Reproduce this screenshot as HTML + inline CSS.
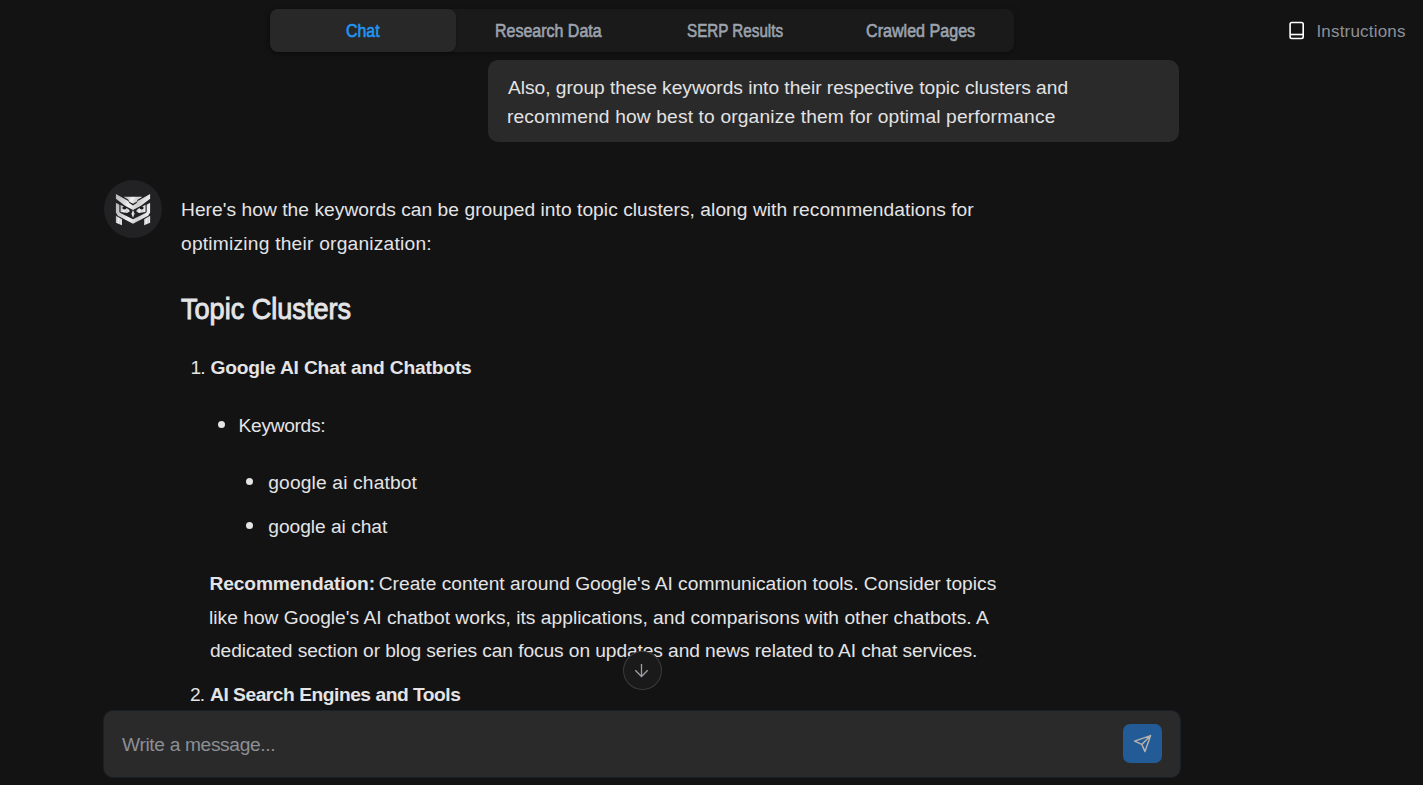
<!DOCTYPE html>
<html><head><meta charset="utf-8">
<style>
*{box-sizing:border-box;margin:0;padding:0}
html,body{width:1423px;height:785px;overflow:hidden;background:#131313;font-family:"Liberation Sans",sans-serif;color:#e4e4e6}
.abs{position:absolute}
.ln{position:absolute;white-space:nowrap}
#tabs{position:absolute;left:270px;top:9px;width:744px;height:43px;background:#1a1a1a;border-radius:8px;box-shadow:0 2px 6px rgba(0,0,0,.25)}
#tabon{position:absolute;left:270px;top:9px;width:186px;height:43px;background:#282828;border-radius:8px;box-shadow:0 1px 3px rgba(0,0,0,.3)}
#bubble{position:absolute;left:488px;top:60px;width:691px;height:82px;background:#2a2a2a;border-radius:10px}
#avatar{position:absolute;left:104px;top:180px;width:58px;height:58px;border-radius:50%;background:#222224}
#input{position:absolute;left:102.5px;top:709.5px;width:1078.5px;height:68px;background:#2a2a2a;border-radius:10px;border:1px solid #18202a}
#send{position:absolute;left:1123px;top:724px;width:39px;height:39px;background:#225b96;border-radius:7px}
#down{position:absolute;left:623px;top:651px;width:38.5px;height:39px;border-radius:50%;background:#1a1a1a;border:1px solid #3c3c3c}
.dot{position:absolute;width:7px;height:7px;border-radius:50%;background:#e4e4e6}
</style></head><body>
<div id="tabs"></div>
<div id="tabon"></div>
<svg class="abs" style="left:1287px;top:20px" width="20" height="21" viewBox="0 0 20 21">
  <rect x="3.1" y="2.5" width="13.1" height="16" rx="1.7" fill="none" stroke="#fff" stroke-width="1.6"/>
  <line x1="3.1" y1="14.5" x2="16.2" y2="14.5" stroke="#fff" stroke-width="1.6"/>
</svg>
<div id="bubble"></div>
<div id="avatar"></div>
<svg class="abs" style="left:113px;top:191px" width="40" height="38" viewBox="0 0 826 785" preserveAspectRatio="none">
  <defs><linearGradient id="g" x1="0" y1="0" x2="1" y2="0.2"><stop offset="0" stop-color="#b4b4b4"/><stop offset="0.3" stop-color="#d4d4d4"/><stop offset="0.5" stop-color="#f2f2f2"/><stop offset="0.75" stop-color="#cfcfcf"/><stop offset="1" stop-color="#ececec"/></linearGradient></defs>
  <g fill="url(#g)">
  <path d="M60 63 L315 204 L337 250 L413 300 L489 250 L511 204 L766 63 L766 161 L578 304 L413 390 L248 304 L60 161 Z"/>
  <path d="M231 118 L595 118 L595 127 L513 176 L489 224 L413 262 L337 224 L313 176 L231 127 Z"/>
  <path d="M60 242 L131 285 L131 436 L153 452 L413 585 L673 452 L695 436 L695 285 L766 242 L766 442 L727 510 L413 677 L99 510 L60 442 Z"/>
  <path d="M155 282 L320 378 L350 420 L290 452 L155 432 Z"/>
  <path d="M671 282 L506 378 L476 420 L536 452 L671 432 Z"/>
  <path d="M413 392 L446 470 L413 555 L380 470 Z"/>
  <path d="M60 510 L184 582 L184 708 L60 657 Z"/>
  <path d="M766 510 L642 582 L642 708 L766 657 Z"/>
  </g>
  <ellipse cx="236" cy="350" rx="42" ry="30" fill="#1b1b1d"/>
  <ellipse cx="590" cy="350" rx="42" ry="30" fill="#1b1b1d"/>
</svg>
<div class="dot" style="left:218px;top:421px"></div>
<div class="dot" style="left:246px;top:478px"></div>
<div class="dot" style="left:246px;top:522px"></div>
<div id="input"></div>
<div id="send"></div>
<svg class="abs" style="left:1133.1px;top:733.7px" width="19.2" height="19.2" viewBox="0 0 24 24"><path d="M22 2 L11 13 M22 2 L15 22 L11 13 L2 9 Z" fill="none" stroke="#b6b3ae" stroke-width="1.8" stroke-linejoin="round" stroke-linecap="round"/></svg>
<div class="ln" style="left:345.90px;top:20px;font-size:17.6px;line-height:22px;color:#2196f3;-webkit-text-stroke:0.6px #2196f3;transform:scaleX(0.9053);transform-origin:0 0">Chat</div>
<div class="ln" style="left:494.79px;top:20px;font-size:17.6px;line-height:22px;color:#9ca3af;-webkit-text-stroke:0.6px #9ca3af;transform:scaleX(0.9085);transform-origin:0 0">Research Data</div>
<div class="ln" style="left:686.90px;top:20px;font-size:17.6px;line-height:22px;color:#9ca3af;-webkit-text-stroke:0.6px #9ca3af;transform:scaleX(0.864);transform-origin:0 0">SERP Results</div>
<div class="ln" style="left:866.20px;top:20px;font-size:17.6px;line-height:22px;color:#9ca3af;-webkit-text-stroke:0.6px #9ca3af;transform:scaleX(0.915);transform-origin:0 0">Crawled Pages</div>
<div class="ln" style="left:1316.40px;top:21px;font-size:17px;line-height:22px;color:#8c9199;letter-spacing:0.191px">Instructions</div>
<div class="ln" style="left:508.00px;top:77px;font-size:19.2px;line-height:22px;color:#e2e2e4;letter-spacing:-0.03px">Also, group these keywords into their respective topic clusters and</div>
<div class="ln" style="left:507.00px;top:106px;font-size:19.2px;line-height:22px;color:#e2e2e4;letter-spacing:0.15px">recommend how best to organize them for optimal performance</div>
<div class="ln" style="left:181.00px;top:199px;font-size:19.2px;line-height:22px;color:#e4e4e6;letter-spacing:0.045px">Here&#39;s how the keywords can be grouped into topic clusters, along with recommendations for</div>
<div class="ln" style="left:181.00px;top:233px;font-size:19.2px;line-height:22px;color:#e4e4e6;letter-spacing:0.221px">optimizing their organization:</div>
<div class="ln" style="left:181.00px;top:292px;font-size:28.8px;line-height:34px;color:#e4e4e6;-webkit-text-stroke:0.9px #e4e4e6;transform:scaleX(0.9403);transform-origin:0 0">Topic Clusters</div>
<div class="ln" style="left:190.50px;top:357px;font-size:19.2px;line-height:22px;color:#e4e4e6;letter-spacing:-1px">1.</div>
<div class="ln" style="left:210.40px;top:357px;font-size:19.2px;line-height:22px;color:#e4e4e6;font-weight:bold;letter-spacing:-0.169px">Google AI Chat and Chatbots</div>
<div class="ln" style="left:238.60px;top:415px;font-size:19.2px;line-height:22px;color:#e4e4e6;letter-spacing:-0.325px">Keywords:</div>
<div class="ln" style="left:268.30px;top:472px;font-size:19.2px;line-height:22px;color:#e4e4e6;letter-spacing:0.156px">google ai chatbot</div>
<div class="ln" style="left:268.30px;top:516px;font-size:19.2px;line-height:22px;color:#e4e4e6;letter-spacing:-0.038px">google ai chat</div>
<div class="ln" style="left:209.50px;top:573px;font-size:19.2px;line-height:22px;color:#e4e4e6;font-weight:bold;letter-spacing:-0.129px">Recommendation:</div>
<div class="ln" style="left:378.70px;top:573px;font-size:19.2px;line-height:22px;color:#e4e4e6;letter-spacing:0.009px">Create content around Google&#39;s AI communication tools. Consider topics</div>
<div class="ln" style="left:209.00px;top:607px;font-size:19.2px;line-height:22px;color:#e4e4e6;letter-spacing:0.019px">like how Google&#39;s AI chatbot works, its applications, and comparisons with other chatbots. A</div>
<div class="ln" style="left:210.00px;top:640px;font-size:19.2px;line-height:22px;color:#e4e4e6;letter-spacing:-0.089px">dedicated section or blog series can focus on updates and news related to AI chat services.</div>
<div class="ln" style="left:190.00px;top:684px;font-size:19.2px;line-height:22px;color:#e4e4e6;letter-spacing:-1px">2.</div>
<div class="ln" style="left:210.00px;top:684px;font-size:19.2px;line-height:22px;color:#e4e4e6;font-weight:bold;letter-spacing:-0.465px">AI Search Engines and Tools</div>
<div class="ln" style="left:122.00px;top:734px;font-size:19.2px;line-height:22px;color:#8b8f96;letter-spacing:-0.353px">Write a message...</div>
<div id="down"></div>
<svg class="abs" style="left:630px;top:658px" width="24" height="24" viewBox="0 0 24 24"><path d="M11.5 6 V18.4 M5.3 12.3 L11.5 18.5 L17.7 12.3" fill="none" stroke="#9ca0a8" stroke-width="1.3"/></svg>
</body></html>
